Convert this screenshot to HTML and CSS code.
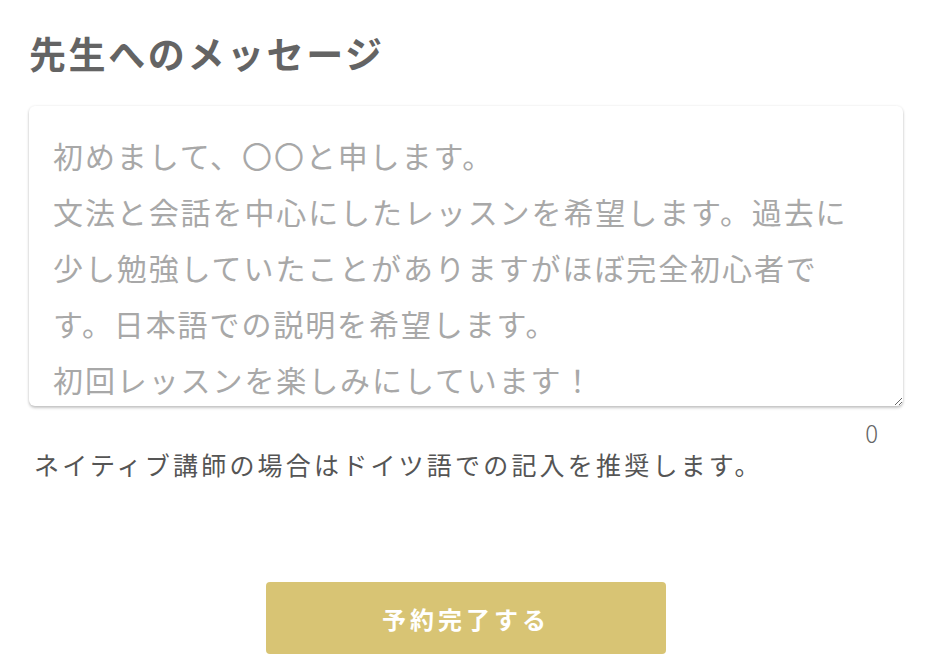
FILE: index.html
```html
<!DOCTYPE html>
<html lang="ja">
<head>
<meta charset="utf-8">
<title>先生へのメッセージ</title>
<link rel="stylesheet" href="styles.css">
</head>
<body>
<main class="page">
  <h2 class="title">先生へのメッセージ</h2>
  <textarea class="message" placeholder="初めまして、〇〇と申します。&#10;文法と会話を中心にしたレッスンを希望します。過去に&#10;少し勉強していたことがありますがほぼ完全初心者で&#10;す。日本語での説明を希望します。&#10;初回レッスンを楽しみにしています！"></textarea>
  <div class="counter">0</div>
  <p class="note">ネイティブ講師の場合はドイツ語での記入を推奨します。</p>
  <div class="actions">
    <button class="submit" type="button">予約完了する</button>
  </div>
</main>
</body>
</html>
```

FILE: styles.css
```css
html, body {
  margin: 0;
  padding: 0;
  background: #ffffff;
}

body {
  font-family: "Noto Sans CJK JP", "Noto Sans", sans-serif;
}

.page {
  width: 874px;
  padding: 0 0 0 29px;
  display: flex;
  flex-direction: column;
}

.title {
  margin: 26px 0 0 0;
  font-size: 37px;
  line-height: 54px;
  font-weight: 700;
  color: #646464;
  letter-spacing: 2.6px;
}

.message {
  display: block;
  margin-top: 26px;
  width: 874px;
  height: 300px;
  box-sizing: border-box;
  padding: 21px 10px 0 24px;
  border: none;
  border-radius: 6px;
  box-shadow: 0 2px 3px rgba(0, 0, 0, 0.22), 0 0 3px rgba(0, 0, 0, 0.08);
  font-family: "Noto Sans CJK JP", "Noto Sans", sans-serif;
  font-size: 30px;
  line-height: 56px;
  letter-spacing: 1.9px;
  color: #444;
  background: #fff;
  outline: none;
  overflow: hidden;
}

.message::placeholder {
  color: #a8a8a8;
  opacity: 1;
}

.counter {
  align-self: flex-end;
  margin: 14px 25px 0 0;
  font-size: 24px;
  font-weight: 300;
  line-height: 26px;
  color: #666;
}

.note {
  margin: 0 0 0 5px;
  font-size: 25px;
  line-height: 36px;
  color: #555;
  letter-spacing: 3.2px;
}

.actions {
  display: flex;
  justify-content: center;
  margin-top: 100px;
}

.submit {
  width: 400px;
  height: 72px;
  border: none;
  border-radius: 4px;
  background: #d8c474;
  color: #ffffff;
  font-family: "Noto Sans CJK JP", "Noto Sans", sans-serif;
  font-size: 24px;
  font-weight: 700;
  letter-spacing: 4px;
  cursor: pointer;
}
```
